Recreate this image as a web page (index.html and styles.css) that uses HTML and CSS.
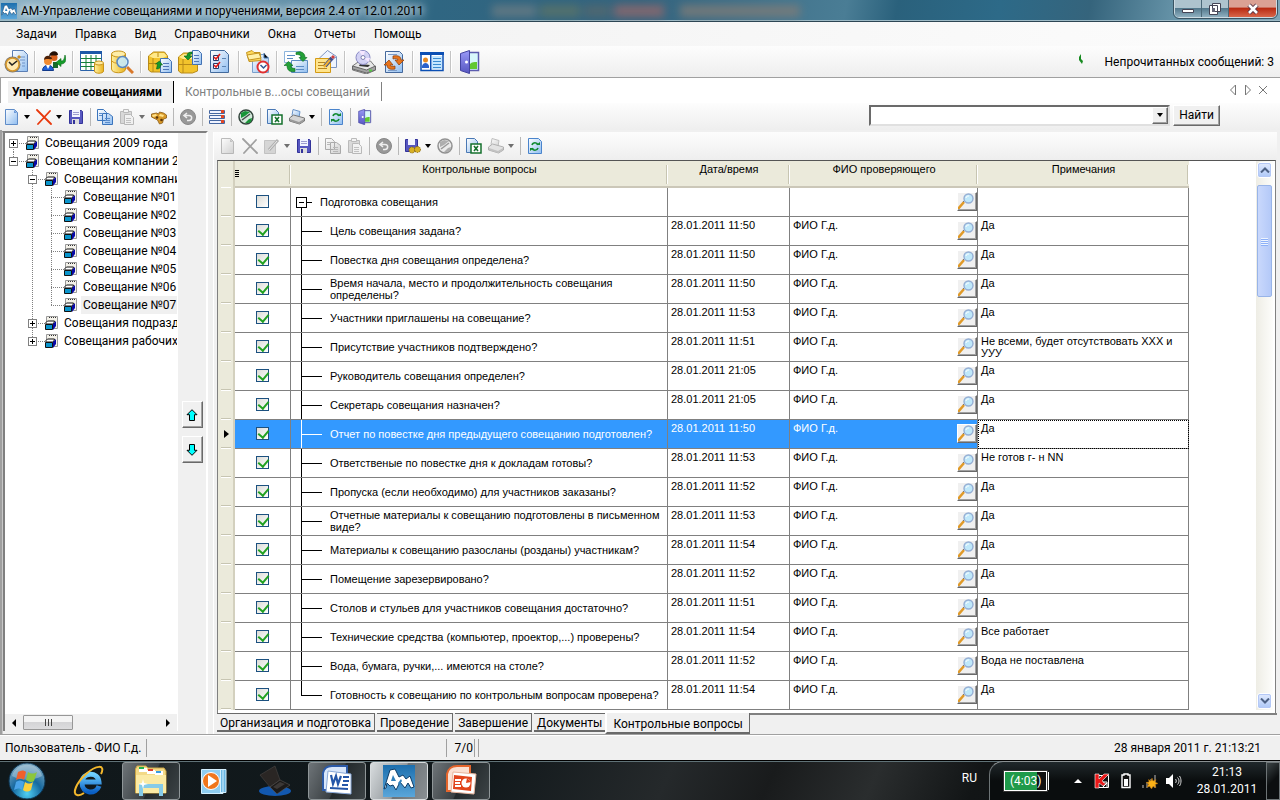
FILE: index.html
```html
<!DOCTYPE html>
<html lang="ru">
<head>
<meta charset="utf-8">
<title>АМ-Управление совещаниями и поручениями</title>
<link rel="stylesheet" href="styles.css">
</head>
<body>
<svg class="defs" aria-hidden="true">
<defs>
<linearGradient id="gPage" x1="0" y1="0" x2="1" y2="1"><stop offset="0" stop-color="#fff"/><stop offset="1" stop-color="#8fbdf0"/></linearGradient>
<linearGradient id="gGold" x1="0" y1="0" x2="1" y2="0"><stop offset="0" stop-color="#fff0a0"/><stop offset="1" stop-color="#e9b21c"/></linearGradient>
<linearGradient id="gDoor" x1="0" y1="0" x2="0" y2="1"><stop offset="0" stop-color="#9a9af8"/><stop offset="1" stop-color="#5656c0"/></linearGradient>
<linearGradient id="gAm" x1="0" y1="0" x2="0" y2="1"><stop offset="0" stop-color="#1c6fae"/><stop offset="1" stop-color="#5aa6da"/></linearGradient>
<radialGradient id="gOrb" cx=".5" cy=".85" r=".9"><stop offset="0" stop-color="#4fd0f4"/><stop offset=".45" stop-color="#17699f"/><stop offset="1" stop-color="#8fb4c8"/></radialGradient>
<linearGradient id="gIe" x1="0" y1="0" x2="0" y2="1"><stop offset="0" stop-color="#6fd0ff"/><stop offset="1" stop-color="#0a5fc4"/></linearGradient>
</defs>
<symbol id="am" viewBox="0 0 32 32"><path fill="url(#gAm)" d="M0 0h32v32H0z"/><path fill="#fff" stroke="#0c3c68" d="M1 24 7 5l5-1 4 8 4-2 3 4 4-3 4 11-3 1-3-5-3 5-5-6-4 8-3-5-3 1-3-3-1 5z"/><path fill="#2f7fba" d="m8 16 2-6 3 6zM15 18l3-4 1 2-3 4z"/></symbol>
<symbol id="timer" viewBox="0 0 24 24"><path fill="url(#gPage)" stroke="#5c7fb4" d="M8.500.5h11l4 4v17h-15z"/><path stroke="#6e93c8" d="M14 7h7M16 10h5M18 13h3M18 16h3"/><circle cx="8.500" cy="14.500" r="8" fill="#777"/><circle cx="8.500" cy="14.500" r="6.500" fill="#ffe9b0" stroke="#d8982a" stroke-width="1.500"/><path stroke="#222" stroke-width="1.600" fill="none" d="m5 12 3 3 5-4"/><path fill="#c98c20" d="m13 7 2-2 2 2-2 2z"/></symbol>
<symbol id="people" viewBox="0 0 24 24"><path fill="#166a2b" d="M11 12h5v6h-5z"/><circle cx="12" cy="7.500" r="3.500" fill="#d8601c"/><path fill="#241006" d="M7 6c1-6 9-6 9-1-3 1-5 0-9 1z"/><path fill="#1f60d8" stroke="#123a8a" d="M.5 20.500c0-7 11-7 11 0z"/><path fill="#fff" d="m4 15 2 4 2-4z"/><circle cx="6" cy="11" r="4" fill="#f08a30"/><path fill="#4a2008" d="M2 10c0-6 8-5 8-1-3 1-5-1-8 1z"/><path fill="#159c2a" stroke="#0a6a18" stroke-width=".6" d="m14 12.500 5-4v2.500c3 0 3-2 4-6 2 6 0 9-4 9v2.500z"/></symbol>
<symbol id="tabledb" viewBox="0 0 24 24"><path fill="#fff" stroke="#2b62a8" d="M.5 2.500h21v18H.5z"/><path fill="#1c58a8" d="M0 1h22v3H0z"/><path stroke="#15803a" fill="none" d="M1 8.500h20M1 12.500h20M1 16.500h20M6 5v15M11 5v15M16 5v15"/><path fill="url(#gGold)" stroke="#c8941a" d="M14.500 13v8c0 3 9 3 9 0v-8"/><ellipse cx="19" cy="13" rx="4.500" ry="2" fill="#ffeaa0" stroke="#c8941a"/></symbol>
<symbol id="finddb" viewBox="0 0 24 24"><path fill="url(#gGold)" stroke="#c8941a" d="M1.500 4v15c0 5 14 5 14 0V4"/><ellipse cx="8.500" cy="4" rx="7" ry="3" fill="#ffeea8" stroke="#c8941a"/><path stroke="#d99a20" fill="none" d="M2 11c2 3 10 3 13 0"/><path stroke="#d9782a" stroke-width="3" d="m17 17 6 6"/><circle cx="12.500" cy="12" r="5.500" fill="#c8ecff" fill-opacity=".9" stroke="#5a87c0" stroke-width="1.500"/></symbol>
<symbol id="boxout" viewBox="0 0 24 24"><path fill="#f2c32c" stroke="#b88a18" d="m.5 6 5-4h11l3 4v14l-5 2H3l-2.500-2z"/><path fill="#ffe98a" d="m1 6 5-3h10l3 3-4 2H5z"/><path stroke="#b88a18" d="M1 13.500h14M5 8v14M10 3v4"/><path fill="url(#gPage)" stroke="#4272b4" d="M12.500 8.500h8l3 3v11h-11z"/><path stroke="#5078b8" d="M15 13.500h6M15 16.500h6M15 19.500h6"/><path fill="#169a2a" stroke="#0b6018" stroke-width=".6" d="m8.500 19 1-5h-2l4-3 3 4h-2c0 3-1 4-4 4z"/></symbol>
<symbol id="boxin" viewBox="0 0 24 24"><path fill="#f2c32c" stroke="#b88a18" d="m.5 7 5-4h11l3 4v14l-5 2H3l-2.500-2z"/><path fill="#ffe98a" d="m1 7 5-3h10l3 3-4 2H5z"/><path stroke="#b88a18" d="M1 14.500h14M5 9v14"/><path fill="url(#gPage)" stroke="#4272b4" d="M14.500.5h6l3 3v11h-9z"/><path stroke="#5078b8" d="M16 5.500h5M16 8.500h5M16 11.500h5"/><path fill="#169a2a" stroke="#0b6018" stroke-width=".6" d="M14 2c-3 0-5 1-5 4H6l4 4 4-4h-2c0-2 1-2 2-2z"/></symbol>
<symbol id="checks" viewBox="0 0 24 24"><path fill="url(#gPage)" stroke="#426a9c" d="M2.500.5h14l4 4v18h-18z"/><path fill="#fff" stroke="#26386a" d="M5.500 5.500h5v5h-5zM5.500 13.500h5v5h-5z"/><path stroke="#e01818" stroke-width="1.600" fill="none" d="m6 7 2 2 4-5M6 15l2 2 4-5"/><path stroke="#5c84b4" d="M14 8.500h4M14 16.500h4"/></symbol>
<symbol id="folderclock" viewBox="0 0 24 24"><path fill="url(#gPage)" stroke="#7aa0cc" d="M6.500 4.500h11l5 3v15h-16z"/><path stroke="#4276b0" d="M18 3v5h4"/><path fill="#ffd95c" stroke="#c39420" d="M.5 2.500 6 .500l2 2h6l1 8-12 1z"/><path fill="#fff0a8" stroke="#c39420" d="m1 5 12-2 2 5-12 2z"/><circle cx="17" cy="17" r="5.500" fill="#fff" stroke="#e03030" stroke-width="2"/><path stroke="#335a94" stroke-width="1.500" fill="none" d="m14.500 15 3 3 3-3"/></symbol>
<symbol id="exchange" viewBox="0 0 24 24"><path fill="#fff" stroke="#8cb4dc" d="M.5 1.500h16v11H.5z"/><path fill="url(#gPage)" stroke="#5c8cc4" d="M7.500 10.500h16v12h-16z"/><path stroke="#5c8cc4" d="M12 16.500h8M12 19.500h8M3 5.500h8M3 8.500h6"/><path fill="#24a038" stroke="#0a6a1c" stroke-width=".6" d="M12 2.500c6-2 9 1 9 5h2l-4 4-4-4h2c0-2-1-3-5-3zM11 21.500c-6 1-8-2-8-6H0l4.500-4 4.500 4H7c0 2 1 3 4 3z"/></symbol>
<symbol id="mailedit" viewBox="0 0 24 24"><path fill="#eef4ff" stroke="#7c94c0" d="m5.500 8 8-7.500 9 6v11h-17z"/><path fill="none" stroke="#7c94c0" d="m5 8 9 5 8-6"/><path fill="#ffe48c" stroke="#d49a14" d="M1.500 8.500h15v14h-15z"/><path stroke="#b88620" d="M4 12.500h7M4 15.500h6M4 18.500h9"/><path stroke="#40508c" stroke-width="4" d="m11 16 7-8"/><path stroke="#f0b030" stroke-width="2" d="m10 17 6-7"/><path stroke="#d04040" stroke-width="3" d="m18 8 2-2"/></symbol>
<symbol id="cdprint" viewBox="0 0 24 24"><path fill="#e7e7e7" stroke="#777" d="m.5 16 7-5h11l5 6v3l-9 4-14-4z"/><path fill="#a4a4a4" stroke="#666" d="m.5 16 14 4 9-4v4l-9 3-14-4z"/><path fill="#333" d="m8 14 10 1-2 2-9-1z"/><circle cx="11" cy="7.500" r="7" fill="#d3d2f4" stroke="#8a8ac4"/><path fill="#f6e6ff" d="m11 7-4-6h6zM11 8l6 4 1-4z"/><circle cx="11" cy="7.500" r="2" fill="#fff" stroke="#8080b0"/><path stroke="#5c4" stroke-width="2" d="M17 20.500h3"/></symbol>
<symbol id="pageswap" viewBox="0 0 24 24"><path fill="url(#gPage)" stroke="#44689c" d="M3.500 1.500h14l3 3v18h-17z"/><path stroke="#7c9cc8" d="M6 4.500h9M6 20.500h9"/><path fill="#e8751c" stroke="#8a3a06" stroke-width=".7" d="M11 6c6-1 8 1 8 4h3l-5 5-4-5h3c0-1-2-2-5-1zM13 19c-6 1-8-1-8-4H2l5-5 4 5H8c0 1 2 2 5 1z"/></symbol>
<symbol id="card" viewBox="0 0 24 24"><path fill="#fff" stroke="#0b4fb4" stroke-width="1.500" d="M1 3.500h22v17H1z"/><path fill="#0b4fb4" d="M0 2h24v3H0zM10 4h1.500v16H10z"/><circle cx="5.500" cy="10" r="2.500" fill="#e88a20"/><path fill="#2b62cc" d="M2 16c1-4 6-4 7 0v2H2z"/><path fill="#c4e6ff" d="M12 6h10v13H12z"/><path stroke="#3a8ad0" d="M13 8.500h8M13 11.500h8M13 14.500h8M13 17.500h8"/></symbol>
<symbol id="door" viewBox="0 0 24 24"><path fill="#d8f8fc" stroke="#5c5cae" stroke-width="1.500" d="M9 2.500h11.500v18H9z"/><path fill="#62c832" d="M12 14c2-2 4-2 7-2v7h-7z"/><path fill="url(#gDoor)" stroke="#4444a0" d="m2.500 3.500 9-3v23l-9-3z"/><circle cx="8.500" cy="12" r="1.500" fill="#fff"/></symbol>
<symbol id="new" viewBox="0 0 16 16"><path fill="url(#gPage)" stroke="#5f8cc8" d="M1.500.5h9l3 3v12h-12z"/><path fill="#6e9cdc" d="M10 1v3h3z"/></symbol>
<symbol id="cross" viewBox="0 0 16 16"><path stroke="#e8380c" stroke-width="1.800" stroke-linecap="round" d="m1 1 14 14M14 2 2 15"/></symbol>
<symbol id="save" viewBox="0 0 16 16"><path fill="#5757c0" stroke="#33339a" d="M1.500 1.500h12l1 1v12h-13z"/><path fill="#f2f4ff" d="M4 1h8v7H4z"/><path stroke="#9c9cd0" d="M5 3.500h6M5 5.500h6"/><path fill="#ddd" d="M4 10h7v5H4z"/><path fill="#33339a" d="M5 11h2v4H5z"/></symbol>
<symbol id="savegear" viewBox="0 0 16 16"><path fill="#5757c0" stroke="#33339a" d="M.5 1.500h12v12H.5z"/><path fill="#f2f4ff" d="M3 1h7v6H3z"/><circle cx="7" cy="12" r="3" fill="#d8b024" stroke="#7a5c08" stroke-dasharray="1 1"/><circle cx="12.500" cy="11.500" r="3" fill="#d8b024" stroke="#7a5c08" stroke-dasharray="1 1"/></symbol>
<symbol id="copy" viewBox="0 0 16 16"><path fill="url(#gPage)" stroke="#3a74bc" d="M.5.5h6l3 3v8h-9zM5.500 4.500h6l4 3v8h-10z"/><path stroke="#5a8ccc" d="M2 4.500h3M2 6.500h3M8 9.500h5M8 11.500h5M8 13.500h5"/></symbol>
<symbol id="paste" viewBox="0 0 16 16"><path fill="#c0c0c0" stroke="#888" d="M1.500 2.500h11v12h-11z"/><path fill="#eee" stroke="#888" d="M4.500.5h5v3h-5zM5.500 5.500h6l3 3v7h-9z"/><path stroke="#999" d="M7 9.500h5M7 11.500h5M7 13.500h5"/></symbol>
<symbol id="binoc" viewBox="0 0 16 16"><path fill="#d99a28" stroke="#8a5a14" stroke-width=".8" d="m.5 5 5-1 2 1 1-2 4 1 3 2v3l-3 1-1 4-3 1-2-4-2-1-4-2z"/><path fill="#ffe28a" d="m1 6 4-1 1 2-4 1zM9 5l4 1-1 2-4-1z"/><circle cx="6" cy="8.500" r="1.300" fill="#5a3408"/><circle cx="10.500" cy="11" r="1.300" fill="#5a3408"/></symbol>
<symbol id="undo" viewBox="0 0 16 16"><circle cx="8" cy="8" r="7.500" fill="#989898" stroke="#888"/><path fill="none" stroke="#eee" stroke-width="1.600" d="M7 4 4 6.500 7 9M4 6.500h5c4 0 3 5 0 5H7"/></symbol>
<symbol id="list" viewBox="0 0 16 16"><path fill="#eef2ff" stroke="#4466a0" d="M.5 1.500h15v3H.5zM.5 6.500h15v3H.5zM.5 11.500h15v3H.5z"/><path fill="#e04828" d="M12 1h3v3h-3zM12 6h3v3h-3zM12 11h3v3h-3z"/></symbol>
<symbol id="globe" viewBox="0 0 16 16"><circle cx="8" cy="8" r="7" fill="#d4e8dc" stroke="#33443c" stroke-width="1.500"/><path fill="#189438" d="m3 4 4-2 5 1-5 4-4 2zM7 14l4-4 3-1-1 4-3 1z"/><path stroke="#44504a" stroke-width="1.500" d="m4 11 8-6"/></symbol>
<symbol id="excel" viewBox="0 0 16 16"><path fill="url(#gPage)" stroke="#4a78b4" d="M.5.5h8l3 3v11H.5z"/><path fill="#fff" stroke="#14702c" stroke-width="1.500" d="M5 6h10v9H5z"/><path stroke="#14702c" stroke-width="1.600" d="m8 8 4 5M12 8l-4 5"/></symbol>
<symbol id="print" viewBox="0 0 16 16"><path fill="url(#gPage)" stroke="#6a94c8" d="m4 .5 7 2-1 6-7-2z"/><path fill="#d4d4d4" stroke="#777" d="m.5 9 4-3 11 3v3l-5 3-10-3z"/><path fill="#999" d="m1 10 9 3 5-3v2l-5 3-9-3z"/></symbol>
<symbol id="refresh" viewBox="0 0 16 16"><path fill="url(#gPage)" stroke="#4a84cc" d="M1.500.5h10l3 3v12h-13z"/><path fill="none" stroke="#118a30" stroke-width="1.600" d="M5 7c1-3 5-3 6 0M5 10c1 3 5 3 6 0"/><path fill="#118a30" d="M9 7h4V4zM7 10H3v3z"/></symbol>
<symbol id="edit" viewBox="0 0 16 16"><path fill="#bbb" stroke="#999" d="M.5 2.500h11v13H.5z"/><path stroke="#777" stroke-width="3" d="m5 12 9-10"/><path stroke="#ddd" d="m5 12 8-9"/></symbol>
<symbol id="caret" viewBox="0 0 6 4"><path d="M0 0h6L3 4z"/></symbol>
<symbol id="cube" viewBox="0 0 14 14"><path fill="#f4f2ea" stroke="#999" d="M2.500.5h11v12h-11z"/><path stroke="#333" stroke-dasharray="1 1" d="M5 1.500h7"/><path fill="#fff" stroke="#111" d="m1.500 7 2-2h7l-1 3h-7z"/><path fill="#0a95cc" stroke="#111" d="M1.500 8.500h7v5h-7z"/><path fill="#0808a8" d="m9 8 3-3v5l-3 4z"/></symbol>
<symbol id="lens" viewBox="0 0 16 16"><path stroke="#e09a28" stroke-width="2.500" d="m0 16 6-7"/><path stroke="#777" d="m5 9 2-2"/><circle cx="10.500" cy="5.500" r="4.500" fill="#bfe8fa" stroke="#94aed4" stroke-width="1.400"/><path stroke="#fff" fill="none" d="M8 5c0-2 2-2 3-2"/></symbol>
<symbol id="arrow" viewBox="0 0 12 12"><path fill="#0ff" stroke="#000" d="m6 .7 5 5H8.500v5.800h-5V5.700H1z"/></symbol>
</svg>

<header class="titlebar">
  <svg class="app-icon"><use href="#am"/></svg>
  <h1>АМ-Управление совещаниями и поручениями, версия 2.4 от 12.01.2011</h1>
  <div class="glass" aria-hidden="true"><i></i><i></i><i></i><i></i><i></i></div>
  <div class="winbtns">
    <button aria-label="Свернуть"><svg viewBox="0 0 14 12"><path fill="#fff" stroke="#445" d="M1.500 6.500h11v3h-11z"/></svg></button>
    <button aria-label="Восстановить"><svg viewBox="0 0 14 12"><path fill="#fff" stroke="#445" d="M4.500.5h8v8h-8zM1.500 2.500h8v9h-8z"/><path fill="#667" d="M4 5h3v4H4z"/></svg></button>
    <button class="close" aria-label="Закрыть"><svg viewBox="0 0 14 12"><path stroke="#534" stroke-width="4.500" d="m3 2 8 8M11 2l-8 8"/><path stroke="#fff" stroke-width="2.600" d="m3 2 8 8M11 2l-8 8"/></svg></button>
  </div>
</header>

<nav class="menu">
  <button>Задачи</button><button>Правка</button><button>Вид</button><button>Справочники</button><button>Окна</button><button>Отчеты</button><button>Помощь</button>
</nav>

<div class="toolbar main-tools">
  <button aria-label="Мои задачи"><svg><use href="#timer"/></svg></button><i class="sep"></i>
  <button aria-label="Сотрудники"><svg><use href="#people"/></svg></button><i class="sep"></i>
  <button aria-label="Таблица"><svg><use href="#tabledb"/></svg></button>
  <button aria-label="Поиск в базе"><svg><use href="#finddb"/></svg></button><i class="sep"></i>
  <button aria-label="Исходящие"><svg><use href="#boxout"/></svg></button>
  <button aria-label="Входящие"><svg><use href="#boxin"/></svg></button>
  <button aria-label="Контроль"><svg><use href="#checks"/></svg></button><i class="sep"></i>
  <button aria-label="Сроки"><svg><use href="#folderclock"/></svg></button><i class="sep"></i>
  <button aria-label="Обмен"><svg><use href="#exchange"/></svg></button>
  <button aria-label="Письмо"><svg><use href="#mailedit"/></svg></button><i class="sep"></i>
  <button aria-label="Печать"><svg><use href="#cdprint"/></svg></button>
  <button aria-label="Обновить"><svg><use href="#pageswap"/></svg></button><i class="sep"></i>
  <button aria-label="Карточка"><svg><use href="#card"/></svg></button><i class="sep"></i>
  <button aria-label="Выход"><svg><use href="#door"/></svg></button>
  <p class="unread"><svg class="leaf" viewBox="0 0 4 10"><path fill="#178a20" d="M2 0 0 3v3l3 4 1-3-2-2z"/></svg>Непрочитанных сообщений: 3</p>
</div>

<div class="doc-tabs">
  <button class="current">Управление совещаниями</button>
  <button class="other">Контрольные в...осы совещаний</button>
  <div class="tab-nav">
    <button aria-label="Назад"><svg viewBox="0 0 8 12"><path fill="none" stroke="#777" d="M6.500 1v10l-5-5z"/></svg></button>
    <button aria-label="Вперед"><svg viewBox="0 0 8 12"><path fill="none" stroke="#777" d="M1.500 1v10l5-5z"/></svg></button>
    <button aria-label="Закрыть вкладку"><svg viewBox="0 0 8 12"><path fill="none" stroke="#777" d="m0 2 8 8M8 2l-8 8"/></svg></button>
  </div>
</div>

<div class="toolbar small-tools">
  <span class="split"><button aria-label="Создать"><svg><use href="#new"/></svg></button><button class="drop" aria-label="Варианты создания"><svg><use href="#caret"/></svg></button></span>
  <span class="split"><button aria-label="Удалить"><svg><use href="#cross"/></svg></button><button class="drop" aria-label="Варианты удаления"><svg><use href="#caret"/></svg></button></span>
  <button aria-label="Сохранить"><svg><use href="#save"/></svg></button><i class="sep"></i>
  <button aria-label="Копировать"><svg><use href="#copy"/></svg></button>
  <span class="split off"><button aria-label="Вставить"><svg><use href="#paste"/></svg></button><button class="drop" aria-label="Варианты вставки"><svg><use href="#caret"/></svg></button></span>
  <button aria-label="Поиск"><svg><use href="#binoc"/></svg></button><i class="sep"></i>
  <button aria-label="Отменить"><svg><use href="#undo"/></svg></button><i class="sep"></i>
  <button aria-label="Список"><svg><use href="#list"/></svg></button><i class="sep"></i>
  <button aria-label="Связи"><svg><use href="#globe"/></svg></button><i class="sep"></i>
  <button aria-label="Экспорт в Excel"><svg><use href="#excel"/></svg></button>
  <span class="split"><button aria-label="Печать"><svg><use href="#print"/></svg></button><button class="drop" aria-label="Варианты печати"><svg><use href="#caret"/></svg></button></span><i class="sep"></i>
  <button aria-label="Обновить"><svg><use href="#refresh"/></svg></button><i class="sep"></i>
  <button aria-label="Выход"><svg><use href="#door"/></svg></button>
  <form class="search">
    <div class="combo"><input type="text" aria-label="Строка поиска"><button type="button" aria-label="Раскрыть"><svg><use href="#caret"/></svg></button></div>
    <button type="button" class="find">Найти</button>
  </form>
</div>

<main class="work">
  <aside class="side">
    <div class="tree-box">
      <ul class="tree">
        <li><div class="node"><button class="plus" aria-label="Развернуть"></button><svg><use href="#cube"/></svg><span>Совещания 2009 года</span></div></li>
        <li><div class="node"><button class="minus" aria-label="Свернуть"></button><svg><use href="#cube"/></svg><span>Совещания компании 2010 года</span></div>
          <ul>
            <li><div class="node"><button class="minus" aria-label="Свернуть"></button><svg><use href="#cube"/></svg><span>Совещания компании</span></div>
              <ul>
                <li><div class="node leafnode"><svg><use href="#cube"/></svg><span>Совещание №01</span></div></li>
                <li><div class="node leafnode"><svg><use href="#cube"/></svg><span>Совещание №02</span></div></li>
                <li><div class="node leafnode"><svg><use href="#cube"/></svg><span>Совещание №03</span></div></li>
                <li><div class="node leafnode"><svg><use href="#cube"/></svg><span>Совещание №04</span></div></li>
                <li><div class="node leafnode"><svg><use href="#cube"/></svg><span>Совещание №05</span></div></li>
                <li><div class="node leafnode"><svg><use href="#cube"/></svg><span>Совещание №06</span></div></li>
                <li><div class="node leafnode picked"><svg><use href="#cube"/></svg><span>Совещание №07</span></div></li>
              </ul>
            </li>
            <li><div class="node"><button class="plus" aria-label="Развернуть"></button><svg><use href="#cube"/></svg><span>Совещания подразделений</span></div></li>
            <li><div class="node"><button class="plus" aria-label="Развернуть"></button><svg><use href="#cube"/></svg><span>Совещания рабочих групп</span></div></li>
          </ul>
        </li>
      </ul>
      <div class="hscroll">
        <button aria-label="Влево"><svg viewBox="0 0 4 8"><path d="M4 0v8L0 4z"/></svg></button>
        <div class="hthumb"><i></i><i></i><i></i></div>
        <button class="end" aria-label="Вправо"><svg viewBox="0 0 4 8"><path d="M0 0v8l4-4z"/></svg></button>
      </div>
    </div>
    <div class="movers">
      <button aria-label="Вверх"><svg><use href="#arrow"/></svg></button>
      <button aria-label="Вниз"><svg class="down"><use href="#arrow"/></svg></button>
    </div>
  </aside>

  <section class="panel">
    <div class="toolbar small-tools inner-tools">
      <button class="off" aria-label="Создать"><svg><use href="#new"/></svg></button>
      <button class="off" aria-label="Удалить"><svg><use href="#cross"/></svg></button>
      <span class="split off"><button aria-label="Изменить"><svg><use href="#edit"/></svg></button><button class="drop" aria-label="Варианты изменения"><svg><use href="#caret"/></svg></button></span>
      <button aria-label="Сохранить"><svg><use href="#save"/></svg></button><i class="sep"></i>
      <button class="off" aria-label="Копировать"><svg><use href="#copy"/></svg></button>
      <button class="off" aria-label="Вставить"><svg><use href="#paste"/></svg></button><i class="sep"></i>
      <button aria-label="Отменить"><svg><use href="#undo"/></svg></button><i class="sep"></i>
      <span class="split"><button aria-label="Сохранить настройки"><svg><use href="#savegear"/></svg></button><button class="drop" aria-label="Варианты настроек"><svg><use href="#caret"/></svg></button></span>
      <button class="off" aria-label="Связи"><svg><use href="#globe"/></svg></button><i class="sep"></i>
      <button aria-label="Экспорт в Excel"><svg><use href="#excel"/></svg></button>
      <span class="split off"><button aria-label="Печать"><svg><use href="#print"/></svg></button><button class="drop" aria-label="Варианты печати"><svg><use href="#caret"/></svg></button></span><i class="sep"></i>
      <button aria-label="Обновить"><svg><use href="#refresh"/></svg></button>
    </div>

    <div class="grid-box">
      <div class="grid-view">
      <table class="grid">
        <colgroup><col class="c-head"><col class="c-check"><col class="c-q"><col class="c-date"><col class="c-who"><col class="c-note"></colgroup>
        <thead><tr><td class="rh"></td><td class="pick"><i></i></td><th>Контрольные вопросы</th><th>Дата/время</th><th>ФИО проверяющего</th><th>Примечания</th></tr></thead>
        <tbody>
        <tr class="group"><td class="rh"></td><td class="ck"><input type="checkbox" aria-label="Подготовка совещания"></td><td class="q"><div><button class="minus" aria-label="Свернуть"></button><span>Подготовка совещания</span></div></td><td></td><td class="who"><div><span></span><button aria-label="Выбрать"><svg><use href="#lens"/></svg></button></div></td><td></td></tr>
        <tr><td class="rh"></td><td class="ck"><input type="checkbox" checked aria-label="Цель"></td><td class="q">Цель совещания задана?</td><td>28.01.2011 11:50</td><td class="who"><div><span>ФИО Г.д.</span><button aria-label="Выбрать"><svg><use href="#lens"/></svg></button></div></td><td>Да</td></tr>
        <tr><td class="rh"></td><td class="ck"><input type="checkbox" checked aria-label="Повестка"></td><td class="q">Повестка дня совещания определена?</td><td>28.01.2011 11:50</td><td class="who"><div><span>ФИО Г.д.</span><button aria-label="Выбрать"><svg><use href="#lens"/></svg></button></div></td><td>Да</td></tr>
        <tr><td class="rh"></td><td class="ck"><input type="checkbox" checked aria-label="Время и место"></td><td class="q">Время начала, место и продолжительность совещания определены?</td><td>28.01.2011 11:50</td><td class="who"><div><span>ФИО Г.д.</span><button aria-label="Выбрать"><svg><use href="#lens"/></svg></button></div></td><td>Да</td></tr>
        <tr><td class="rh"></td><td class="ck"><input type="checkbox" checked aria-label="Приглашение"></td><td class="q">Участники приглашены на совещание?</td><td>28.01.2011 11:53</td><td class="who"><div><span>ФИО Г.д.</span><button aria-label="Выбрать"><svg><use href="#lens"/></svg></button></div></td><td>Да</td></tr>
        <tr><td class="rh"></td><td class="ck"><input type="checkbox" checked aria-label="Присутствие"></td><td class="q">Присутствие участников подтверждено?</td><td>28.01.2011 11:51</td><td class="who"><div><span>ФИО Г.д.</span><button aria-label="Выбрать"><svg><use href="#lens"/></svg></button></div></td><td>Не всеми, будет отсутствовать XXX и УУУ</td></tr>
        <tr><td class="rh"></td><td class="ck"><input type="checkbox" checked aria-label="Руководитель"></td><td class="q">Руководитель совещания определен?</td><td>28.01.2011 21:05</td><td class="who"><div><span>ФИО Г.д.</span><button aria-label="Выбрать"><svg><use href="#lens"/></svg></button></div></td><td>Да</td></tr>
        <tr><td class="rh"></td><td class="ck"><input type="checkbox" checked aria-label="Секретарь"></td><td class="q">Секретарь совещания назначен?</td><td>28.01.2011 21:05</td><td class="who"><div><span>ФИО Г.д.</span><button aria-label="Выбрать"><svg><use href="#lens"/></svg></button></div></td><td>Да</td></tr>
        <tr class="active"><td class="rh"><svg viewBox="0 0 5 8"><path d="M0 0v8l5-4z"/></svg></td><td class="ck"><input type="checkbox" checked aria-label="Отчет"></td><td class="q">Отчет по повестке дня предыдущего совещанию подготовлен?</td><td>28.01.2011 11:50</td><td class="who"><div><span>ФИО Г.д.</span><button aria-label="Выбрать"><svg><use href="#lens"/></svg></button></div></td><td class="focus">Да</td></tr>
        <tr><td class="rh"></td><td class="ck"><input type="checkbox" checked aria-label="Ответственные"></td><td class="q">Ответственые по повестке дня к докладам готовы?</td><td>28.01.2011 11:53</td><td class="who"><div><span>ФИО Г.д.</span><button aria-label="Выбрать"><svg><use href="#lens"/></svg></button></div></td><td>Не готов г- н NN</td></tr>
        <tr><td class="rh"></td><td class="ck"><input type="checkbox" checked aria-label="Пропуска"></td><td class="q">Пропуска (если необходимо) для участников заказаны?</td><td>28.01.2011 11:52</td><td class="who"><div><span>ФИО Г.д.</span><button aria-label="Выбрать"><svg><use href="#lens"/></svg></button></div></td><td>Да</td></tr>
        <tr><td class="rh"></td><td class="ck"><input type="checkbox" checked aria-label="Отчетные материалы"></td><td class="q">Отчетные материалы к совещанию подготовлены в письменном виде?</td><td>28.01.2011 11:53</td><td class="who"><div><span>ФИО Г.д.</span><button aria-label="Выбрать"><svg><use href="#lens"/></svg></button></div></td><td>Да</td></tr>
        <tr><td class="rh"></td><td class="ck"><input type="checkbox" checked aria-label="Рассылка"></td><td class="q">Материалы к совещанию разосланы (розданы) участникам?</td><td>28.01.2011 11:54</td><td class="who"><div><span>ФИО Г.д.</span><button aria-label="Выбрать"><svg><use href="#lens"/></svg></button></div></td><td>Да</td></tr>
        <tr><td class="rh"></td><td class="ck"><input type="checkbox" checked aria-label="Помещение"></td><td class="q">Помещение зарезервировано?</td><td>28.01.2011 11:52</td><td class="who"><div><span>ФИО Г.д.</span><button aria-label="Выбрать"><svg><use href="#lens"/></svg></button></div></td><td>Да</td></tr>
        <tr><td class="rh"></td><td class="ck"><input type="checkbox" checked aria-label="Столы и стулья"></td><td class="q">Столов и стульев для участников совещания достаточно?</td><td>28.01.2011 11:51</td><td class="who"><div><span>ФИО Г.д.</span><button aria-label="Выбрать"><svg><use href="#lens"/></svg></button></div></td><td>Да</td></tr>
        <tr><td class="rh"></td><td class="ck"><input type="checkbox" checked aria-label="Технические средства"></td><td class="q">Технические средства (компьютер, проектор,...) проверены?</td><td>28.01.2011 11:54</td><td class="who"><div><span>ФИО Г.д.</span><button aria-label="Выбрать"><svg><use href="#lens"/></svg></button></div></td><td>Все работает</td></tr>
        <tr><td class="rh"></td><td class="ck"><input type="checkbox" checked aria-label="Вода и бумага"></td><td class="q">Вода, бумага, ручки,... имеются на столе?</td><td>28.01.2011 11:52</td><td class="who"><div><span>ФИО Г.д.</span><button aria-label="Выбрать"><svg><use href="#lens"/></svg></button></div></td><td>Вода не поставлена</td></tr>
        <tr><td class="rh"></td><td class="ck"><input type="checkbox" checked aria-label="Готовность"></td><td class="q">Готовность к совещанию по контрольным вопросам проверена?</td><td>28.01.2011 11:54</td><td class="who"><div><span>ФИО Г.д.</span><button aria-label="Выбрать"><svg><use href="#lens"/></svg></button></div></td><td>Да</td></tr>
        </tbody>
      </table>
      </div>
      <div class="vscroll">
        <button aria-label="Вверх"><svg viewBox="0 0 10 6"><path fill="none" stroke="#4d6185" stroke-width="2" d="m1 5.500 4-4 4 4"/></svg></button>
        <div class="vthumb"><i></i><i></i><i></i><i></i></div>
        <button class="end" aria-label="Вниз"><svg viewBox="0 0 10 6"><path fill="none" stroke="#4d6185" stroke-width="2" d="m1 .5 4 4 4-4"/></svg></button>
      </div>
    </div>

    <div class="page-tabs">
      <button>Организация и подготовка</button><button>Проведение</button><button>Завершение</button><button>Документы</button><button class="current">Контрольные вопросы</button><i></i>
    </div>
  </section>
</main>

<footer class="status">
  <span class="user">Пользователь - ФИО Г.д.</span>
  <span class="count">7/0</span><i></i>
  <time>28 января 2011 г. 21:13:21</time>
</footer>

<div class="taskbar">
  <button class="orb" aria-label="Пуск"><svg viewBox="0 0 38 38"><circle cx="19" cy="19" r="18" fill="url(#gOrb)" stroke="#0c3350"/><path fill="#fff" opacity=".3" d="M4 14C8-1 30-1 34 14c-10 5-20 5-30 0z"/><path fill="#f0602c" d="M10 10c3-2 6-2 8 0l-2 8c-2-2-5-2-8 0z"/><path fill="#8cc63c" d="M20 10c3 2 6 2 9 0l-3 9c-2 2-5 1-8-1z"/><path fill="#4aa4e8" d="M8 20c3-2 5-2 8 0l-2 8c-2-2-5-2-8 0z"/><path fill="#fcd03c" d="M17 20c3 2 5 2 8 0l-2 8c-3 2-5 2-8 0z"/></svg></button>
  <button class="task" aria-label="Internet Explorer"><svg viewBox="0 0 32 32"><path fill="none" stroke="url(#gIe)" stroke-width="5" d="M26 21c-3 9-17 8-17-3S25 6 26 17H10"/><path fill="none" stroke="#f4b82c" stroke-width="2" d="M28 9c5-10-5-9-15 0S-1 29 4 30c3 1 7-2 7-2"/></svg></button>
  <button class="task open" aria-label="Проводник"><svg viewBox="0 0 32 32"><path fill="#f3d986" stroke="#c9a445" d="M.5 4 2 1h9l2 2h16l2 3v22H.5z"/><path fill="#fff" d="M4 3h8v4H4zM12 5h8v4h-8zM20 6h8v4h-8z"/><path fill="#22b14c" d="M4 2h5v2H4z"/><path fill="#e0402c" d="M13 4h5v2h-5z"/><path fill="#3a9be0" d="M21 6h5v2h-5z"/><path fill="#fbeaa4" d="M1 10h30v18H1z"/><path fill="none" stroke="#86cbe8" stroke-width="4" d="M6 31V21h20v10"/><path fill="#fff" d="m8 14 1 4 4 1-4 1-1 4-1-4-4-1 4-1z"/></svg></button>
  <button class="task" aria-label="Проигрыватель"><svg viewBox="0 0 32 32"><path fill="#6bb7e4" stroke="#d4f0ff" d="M14 4.500h15v23H14zM10 4.500h16v24H10z"/><path fill="#8fcdf0" stroke="#d4f0ff" d="M4.500 4.500h19v24h-19z"/><circle cx="14" cy="16" r="8.500" fill="#f0761c" stroke="#fff"/><path fill="#fff" d="m11 10 9 6-9 6z"/></svg></button>
  <button class="task" aria-label="Ноутбук"><svg viewBox="0 0 32 32"><ellipse cx="16" cy="26" rx="16" ry="5" fill="#1258b0"/><path fill="#2a2624" stroke="#4a4644" stroke-width=".6" d="m1 10 15-9 5 14-10 7z"/><path fill="#1c1a19" stroke="#5a5654" stroke-width=".6" d="m11 22 10-7 10 5-13 9z"/><path fill="#3c3836" d="m14 22 7-5 5 2-8 5z"/></svg></button>
  <button class="task open" aria-label="Word"><svg viewBox="0 0 32 32"><path fill="#d8e6fa" stroke="#2c5aa8" stroke-width="2" d="M2 8c1-5 5-7 9-7h15v24H2z"/><path fill="#fff" stroke="#88a8d8" d="m7 6 23 3v20L5 27z"/><path fill="none" stroke="#2456a8" stroke-width="2.200" d="m10 10 2 9 3-8 2 8 3-8"/><path stroke="#2456a8" stroke-width="2" d="M22 12h6M22 16h6M21 20h6M9 23l18 1"/></svg></button>
  <button class="task open lit" aria-label="АМ"><svg><use href="#am"/></svg></button>
  <button class="task open" aria-label="PowerPoint"><svg viewBox="0 0 32 32"><path fill="#fbe0d2" stroke="#e4652c" stroke-width="2" d="M2 9c1-5 5-8 10-8h13v25H2z"/><path fill="#fff" stroke="#e8b49c" d="m8 7 23 2-2 20-23-2z"/><path fill="#e2451c" d="m9 10 18 2-1 14-18-2z"/><circle cx="21" cy="18" r="4.500" fill="#fff"/><path fill="#e2451c" d="m21 18 5-1-4-4z"/><path stroke="#fff" stroke-width="2" d="M10 15h6M10 18h5M10 21h6"/></svg></button>
  <span class="lang">RU</span>
  <div class="tray">
    <span class="battery">(4:03)</span>
    <svg class="tri" viewBox="0 0 8 4"><path fill="#fff" d="M0 4h8L4 0z"/></svg>
    <svg class="ti" viewBox="0 0 16 16"><path fill="#111" stroke="#fff" d="M2.500 2.500h12v12h-12z"/><path fill="#e81818" stroke="#fff" stroke-width=".6" d="M1 1h4v5l5-5h5L8 8l4 3-3 2-4-3v5H1z"/><path fill="none" stroke="#fff" d="M9 9h4v5M9 14l4-4"/></svg>
    <svg class="ti" viewBox="0 0 16 16"><path fill="#111" stroke="#fff" stroke-width="1.400" d="M6 2V1h4v1h2v12.500H4V2z"/><path fill="#fff" d="M6 6h4v7H6z"/></svg>
    <svg class="ti" viewBox="0 0 16 16"><path fill="#666" d="M0 12h2v3H0zM4 9h2v6H4zM8 6h2v9H8zM12 2h2v13h-2z"/><path fill="#fbb117" stroke="#a86408" stroke-width=".5" d="m10 5 1 3 3-1.500L13 9l3 1.500-3 1 1 3-3-1-1.500 2.500L8 13.500l-3 .5 1.500-3L4 9.500l3-.5-.5-2.500L9 8z"/></svg>
    <svg class="ti" viewBox="0 0 16 16"><path fill="#fff" d="M0 5h3l4-4v14l-4-4H0z"/><path fill="none" stroke="#ddd" d="M9.500 6c1 1 1 3 0 4M11.500 4.500c2 2 2 5 0 7M13.500 3c2 3 2 7 0 10"/></svg>
    <time class="clock"><span>21:13</span><span>28.01.2011</span></time>
    <button class="desk" aria-label="Показать рабочий стол"></button>
  </div>
</div>
</body>
</html>
```
FILE: styles.css
```css
* { box-sizing: border-box; }
body {
  margin: 0;
  min-height: 100vh;
  display: flex;
  flex-direction: column;
  background: #f0f0f0;
  color: #000;
  font: 12px/16px Roboto, "Open Sans", sans-serif;
}
.defs { position: absolute; width: 0; height: 0; }
button { border: 0; padding: 0; margin: 0; background: none; font: inherit; color: inherit; }
svg { display: block; }
ul { list-style: none; margin: 0; padding: 0; }

/* window caption */
.titlebar {
  display: flex;
  align-items: center;
  height: 22px;
  overflow: hidden;
  border-bottom: 1px solid #2d4654;
  box-shadow: inset 0 -1px #9dbac6;
  background: linear-gradient(100deg, #8fb3c6 0, #7ba3b8 12%, #5d8ca5 26%, #2f6682 34%, #34647e 50%, #4a7d95 66%, #2a617c 70%, #2d6a88 78%, #35647c 85%, #6f9cb0 93%, #7ea6b8 100%);
}
.app-icon { width: 16px; height: 16px; margin: 0 4px 0 1px; }
.titlebar h1 {
  margin: 0;
  font-size: 12px;
  font-weight: 400;
  white-space: nowrap;
  text-shadow: 0 0 6px #dce8ee, 0 0 8px #c8d8e0, 0 0 10px #c8d8e0;
}
.glass { flex: 1; display: flex; gap: 4px; padding-left: 68px; filter: blur(4px); opacity: .8; }
.glass i { height: 12px; width: 44px; background: #6a7c84; }
.glass i:nth-child(2) { width: 40px; background: #5c7468; }
.glass i:nth-child(3) { width: 26px; background: #55686e; }
.glass i:nth-child(4) { width: 50px; background: #94686c; margin-right: 12px; }
.glass i:nth-child(5) { width: 120px; background: #7f7c78; }
.winbtns { display: flex; align-self: flex-start; margin-right: 3px; border: 1px solid #cddbe2; border-top: 0; border-radius: 0 0 5px 5px; overflow: hidden; outline: 1px solid #3a5463; }
.winbtns button { width: 27px; height: 17px; display: grid; place-items: center; border-right: 1px solid #4b6878; background: linear-gradient(#aec3ce 45%, #54798d 50%, #8fb0c0); }
.winbtns .close { width: 47px; border-right: 0; background: linear-gradient(#dba194 40%, #b92c14 50%, #d8664a); }
.winbtns svg { width: 14px; height: 12px; }

.menu { display: flex; height: 24px; padding-left: 7px; background: linear-gradient(90deg, #f0f0f0, #fcfcfc); }
.menu button { padding: 0 9px; }

/* toolbars */
.toolbar { display: flex; align-items: center; gap: 6px; background: linear-gradient(#fdfdfd, #eee); }
.main-tools { height: 32px; padding: 0 6px 0 4px; border-bottom: 1px solid #a0a0a0; }
.main-tools svg { width: 24px; height: 24px; }
.main-tools .sep { width: 2px; height: 22px; background: #c4c4c4; border-right: 1px solid #fff; }
.unread { margin: 0 0 0 auto; display: flex; gap: 22px; }
.main-tools .leaf { width: 4px; height: 10px; }

.doc-tabs { display: flex; height: 25px; padding: 3px 13px 0 7px; background: #fff; border-left: 1px solid #a0a0a0; }
.doc-tabs .current { padding: 0 11px 0 4px; font-weight: 700; background: #f0f0f0; border-right: 1px solid #000; }
.doc-tabs .other { padding: 0 11px; height: 19px; margin-top: 1px; color: #808080; border-right: 1px solid #808080; }
.tab-nav { margin-left: auto; display: flex; gap: 7px; align-items: center; padding-bottom: 4px; }
.tab-nav svg { width: 8px; height: 12px; }

.small-tools { height: 27px; padding: 0 0 0 4px; }
.small-tools svg { width: 16px; height: 16px; }
.small-tools .sep { width: 1px; height: 18px; background: #b8b8b8; }
.split { display: flex; align-items: center; gap: 4px; }
.small-tools .drop svg, .combo svg { width: 6px; height: 4px; }
.off { filter: grayscale(1) opacity(.55); }
.search { margin-left: auto; display: flex; gap: 3px; align-self: stretch; align-items: center; padding: 0 60px 3px 0; }
.combo { display: flex; width: 301px; height: 21px; background: #fff; border: 2px solid #6a6a6a; border-color: #6a6a6a #e0e0e0 #e0e0e0 #6a6a6a; }
.combo input { flex: 1; min-width: 0; border: 0; padding: 0 3px; outline: 0; background: none; font: inherit; }
.combo button, .find, .movers button, .who button { background: #f0f0f0; border: 1px solid #fff; border-right-color: #696969; border-bottom-color: #696969; box-shadow: inset -1px -1px #a0a0a0; }
.combo button { width: 16px; display: grid; place-items: center; }
.find { width: 47px; height: 21px; line-height: 18px; }

/* work area */
.work { flex: 1; display: flex; gap: 5px; border-bottom: 1px solid #a0a0a0; border-left: 2px solid #a0a0a0; padding-right: 3px; }
.side { width: 206px; display: flex; border-top: 2px solid #808080; border-left: 1px solid #c8c8c8; border-right: 2px solid #fff; padding-bottom: 3px; margin-top: 1px; }
.tree-box { flex: 1; min-width: 0; display: flex; flex-direction: column; background: #fff; border-left: 2px solid #808080; padding-top: 1px; }
.tree { flex: 1; overflow: hidden; }
.tree li { background: repeating-linear-gradient(#808080 0 1px, transparent 1px 2px) 8px 0 / 1px 100% no-repeat; }
.tree li:last-child { background-size: 1px 9px; }
.tree > li:first-child { background-position: 8px 9px; }
.tree li ul { margin-left: 19px; }
.node { display: flex; align-items: center; height: 18px; padding-left: 4px; white-space: nowrap; background: repeating-linear-gradient(90deg, #808080 0 1px, transparent 1px 2px) 8px 9px / 14px 1px no-repeat; }
.node button { flex: none; width: 9px; height: 9px; border: 1px solid #808080; }
.plus, .minus { background: linear-gradient(#000, #000) center / 5px 1px no-repeat, #fff; }
.plus { background: linear-gradient(#000, #000) center / 5px 1px no-repeat, linear-gradient(#000, #000) center / 1px 5px no-repeat, #fff; }
.node svg { flex: none; width: 14px; height: 14px; margin: 0 4px 0 7px; }
.node span { flex: 1; padding-left: 2px; line-height: 18px; }
.leafnode { padding-left: 13px; }
.picked span { background: #f0f0f0; }
.hscroll { display: flex; align-items: center; gap: 7px; height: 17px; padding: 0 7px; background: #f0f0f0; }
.hscroll svg { width: 4px; height: 8px; }
.hscroll .end { margin-left: auto; }
.hthumb { width: 50px; height: 15px; display: flex; gap: 2px; align-items: center; justify-content: center; border: 1px solid #979797; border-radius: 1px; background: linear-gradient(#f4f4f4 45%, #d4d4d6 50%, #dcdcde); }
.hthumb i { width: 1px; height: 7px; background: #444; }
.movers { width: 29px; display: flex; flex-direction: column; justify-content: center; align-items: center; gap: 8px; border-left: 1px solid #fff; }
.movers button { width: 21px; height: 27px; display: grid; place-items: center; }
.movers svg { width: 12px; height: 12px; }
.down { transform: rotate(180deg); }

.panel { flex: 1; min-width: 0; display: flex; flex-direction: column; border-left: 1px solid #fff; margin-top: 2px; }
.inner-tools { height: 28px; padding-left: 6px; }
.grid-box { flex: 1; display: flex; margin: 0 1px 0 3px; border-top: 1px solid #555; border-left: 1px solid #808080; border-right: 1px solid #808080; padding: 0 2px 3px 0; background: #fff; }
.grid-view { flex: 1; min-width: 0; overflow: hidden; }
.grid { width: 971px; table-layout: fixed; border-collapse: separate; border-spacing: 0; font: 11px/12px "Liberation Sans", Arial, sans-serif; }
.c-head { width: 17px; }
.c-check { width: 56px; }
.c-q { width: 377px; }
.c-date { width: 122px; }
.c-who { width: 188px; }
.c-note { width: 211px; }
.grid th, .grid td { height: 29px; padding: 2px 3px 0; vertical-align: top; text-align: left; border-right: 1px solid #808080; border-bottom: 1px solid #808080; }
.grid thead th, .grid thead td {
  height: 27px;
  padding: 2px 0 0;
  font-weight: 400;
  text-align: center;
  border-right: 0;
  border-bottom: 2px solid #cbc7b8;
  background: linear-gradient(#c7c5b2, #c7c5b2) right 1px top 4px / 1px 19px no-repeat, linear-gradient(#fff, #fff) right 0 top 4px / 1px 19px no-repeat, #ebeadb;
}
.grid thead .pick i { display: block; width: 4px; height: 8px; margin-top: 7px; background: repeating-linear-gradient(#000 0 1px, transparent 1px 2px); }
.grid .rh {
  padding: 0 0 2px;
  vertical-align: middle;
  border-right: 2px solid #d3d0be;
  border-bottom: 0;
  background: linear-gradient(#c7c5b2, #c7c5b2) 3px 27px / 10px 1px no-repeat, linear-gradient(#fff, #fff) 3px 28px / 10px 1px no-repeat, #ebeadb;
}
.grid thead .rh { border-bottom: 0; background: linear-gradient(#fff, #fff) 3px 26px / 10px 1px no-repeat, #ebeadb; }
.rh svg { width: 5px; height: 8px; margin-left: 6px; }
.grid .ck { padding: 0 0 2px; vertical-align: middle; }
.ck input { appearance: none; display: block; width: 13px; height: 13px; margin: 0 auto; border: 1px solid #1c5180; background: linear-gradient(135deg, #dcdcd7, #fff); }
.ck input:checked::before { content: ""; display: block; width: 5px; height: 8px; margin: 0 0 0 3px; border: solid #21a121; border-width: 0 2px 2px 0; transform: rotate(40deg); }
.grid .q {
  --line: #000;
  padding: 0 2px 0 39px;
  vertical-align: middle;
  background: linear-gradient(var(--line), var(--line)) 10px 0 / 1px 100% no-repeat, linear-gradient(var(--line), var(--line)) 10px 14px / 21px 1px no-repeat;
}
.grid tr:last-child .q { background-size: 1px 15px, 21px 1px; }
.grid .group .q { padding-left: 5px; background-size: 1px 100%, 11px 1px; background-position: 10px 14px, 10px 14px; }
.q div { display: flex; align-items: center; gap: 13px; }
.q button { width: 11px; height: 11px; border: 1px solid #000; }
.grid .who { padding: 0; }
.who div { display: flex; height: 27px; align-items: center; padding-left: 3px; }
.who span { flex: 1; align-self: flex-start; padding-top: 2px; }
.who button { width: 20px; height: 19px; padding: 0 2px 1px 0; }
.who svg { width: 16px; height: 16px; }
.active td:not(.rh):not(.focus) { background-color: #3399ff; color: #fff; }
.grid .active .q { --line: #fff; }
.grid .focus { outline: 1px dotted #000; outline-offset: -1px; }

.vscroll { width: 17px; display: flex; flex-direction: column; gap: 7px; padding: 1px; background: linear-gradient(90deg, #eeede5, #fdfdfb); }
.vscroll button { height: 16px; display: grid; place-items: center; border: 1px solid #fff; outline: 1px solid #b4c8f6; outline-offset: -2px; border-radius: 3px; background: linear-gradient(#e1eafe, #aec8f7); }
.vscroll svg { width: 10px; height: 6px; }
.vscroll .end { margin-top: auto; }
.vthumb { height: 112px; display: flex; flex-direction: column; gap: 1px; justify-content: center; align-items: center; border: 1px solid #98b4e8; border-radius: 2px; background: linear-gradient(90deg, #c9d8fc, #b4c9f8); }
.vthumb i { width: 7px; height: 1px; background: #eef4fe; box-shadow: 0 1px #8cb0f8; }

.page-tabs { display: flex; align-items: flex-start; height: 21px; padding-left: 3px; }
.page-tabs button { height: 19px; padding: 1px 3px 0; line-height: 16px; white-space: nowrap; border: solid #696969; border-width: 1px 1px 2px 0; margin-right: 2px; }
.page-tabs button:nth-child(4) { margin-right: 0; border-right: 0; }
.page-tabs .current { height: 21px; padding: 3px 6px 0; border-top: 0; border-left: 2px solid #fff; margin: 0; }
.page-tabs i { flex: 1; border-top: 2px solid #808080; }

.status { display: flex; align-items: center; height: 25px; padding: 0 19px 0 5px; border-top: 1px solid #fff; }
.status .user { width: 142px; line-height: 18px; white-space: nowrap; border-right: 1px solid #a0a0a0; }
.status .count { width: 328px; text-align: right; padding-right: 1px; line-height: 18px; border-right: 1px solid #a0a0a0; background: linear-gradient(#a0a0a0, #a0a0a0) 299px 0 / 1px 18px no-repeat; }
.status i { width: 4px; height: 18px; border-right: 1px solid #a0a0a0; }
.status time { margin-left: auto; }

/* taskbar */
.taskbar { display: flex; align-items: center; gap: 4px; height: 40px; padding-left: 8px; color: #fff; border-top: 1px solid #000; box-shadow: inset 0 1px #5f7176; background: linear-gradient(115deg, #10181b 0, #12191c 38%, #25292b 52%, #191b1c 60%, #2a2d2e 68%, #121516 76%, #0b1012 100%); }
.orb { width: 38px; height: 38px; margin-right: 10px; }
.task { width: 58px; height: 38px; display: grid; place-items: center; }
.task svg { width: 32px; height: 32px; }
.open { border: 1px solid #8f9698; border-radius: 3px; background: linear-gradient(115deg, #6e7478, #3a4043 50%, #23292b 52%, #3d4447); }
.lit { border-color: #d8dcde; background: linear-gradient(115deg, #d8dcde, #949a9e 50%, #6d7377 52%, #8a9094); }
.lang { margin-left: auto; padding: 0 8px 6px 0; }
.tray { display: flex; align-items: center; align-self: stretch; padding-left: 14px; border-left: 1px solid #6d7476; border-top: 1px solid #8a9092; border-radius: 14px 0 0 0; background: linear-gradient(#20282b, #0a0d0e 50%); }
.battery { width: 43px; height: 20px; margin-right: 27px; padding-left: 5px; border: 1px solid #fff; outline: 1px solid #333; line-height: 18px; background: linear-gradient(90deg, #1f9a4a 32px, #111 32px); box-shadow: 3px 0 0 -1px #fff; }
.tri { width: 8px; height: 4px; margin-right: 12px; }
.ti { width: 16px; height: 16px; margin-right: 8px; }
.clock { display: flex; flex-direction: column; width: 74px; line-height: 17px; text-align: center; }
.desk { width: 14px; align-self: stretch; margin-left: 2px; border: 1px solid #6d7476; background: linear-gradient(135deg, #3c4446, #0c0f10 50%); }
```
